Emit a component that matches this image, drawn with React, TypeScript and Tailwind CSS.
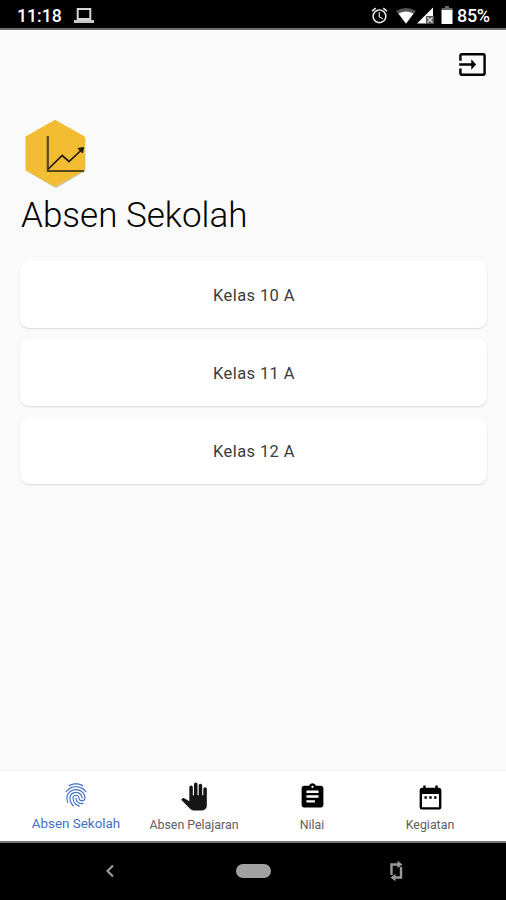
import React from "react";
import { MdInput, MdAlarm, MdAssignment, MdDateRange, MdFingerprint, MdPanTool } from "react-icons/md";

const classes = ["Kelas 10 A", "Kelas 11 A", "Kelas 12 A"];

export default function App() {
  return (
    <div className="flex h-[900px] w-[506px] flex-col overflow-hidden bg-[#fafafa] font-['Roboto',sans-serif] text-black">
      <header className="flex h-[30px] shrink-0 items-start border-b-2 border-[#707070] bg-black pl-[17px] text-white">
        <span className="mt-[4px] w-[58px] text-[17.7px] leading-6 font-medium"><span className="inline-block whitespace-nowrap">11:18</span></span>
        <svg className="mt-[7px] ml-[-1px]" width="20" height="17" viewBox="0 0 20 17" fill="none">
          <path d="M3.7 2h12.6v10H3.7z" stroke="#d6d6d6" strokeWidth="2" />
          <path d="M0 13h20v3H0z" fill="#c9c9c9" />
        </svg>
        <MdAlarm className="mt-[6px] ml-[276px] h-[19px] w-[19px] text-[#e8e8e8]" />
        <svg className="mt-[8px] ml-[7px]" width="20" height="16" viewBox="0 0 20 16">
          <path d="M0 3Q10-3 20 3L10 16Z" fill="#555" />
          <path d="M2.5 5.5Q10 1.5 17.5 5.5L10 15.5Z" fill="white" />
        </svg>
        <svg className="mt-[7px] ml-[1px]" width="17" height="17" viewBox="0 0 17 17">
          <path d="M0 16.5L16 .5v16Z" fill="white" />
          <path d="M9 9h8v8H9z" fill="#555" />
          <path d="M10.5 10.5l5 5m0-5l-5 5" stroke="#ddd" strokeWidth="1.4" />
        </svg>
        <svg className="mt-[6px] ml-[7px]" width="12" height="18" viewBox="0 0 12 18">
          <path d="M4 0h4v2h3.5v3H.5V2H4Z" fill="#666" />
          <path d="M.5 4h11v14H.5z" fill="white" />
        </svg>
        <span className="mt-[4px] ml-[4px] text-[18px] leading-6 font-medium tracking-[-0.3px]">85%</span>
      </header>

      <main className="flex min-h-0 flex-1 flex-col px-5">
        <div className="mr-[-1px] flex h-[89px] shrink-0 justify-end pt-[19px]">
          <MdInput className="h-[31px] w-[29px]" preserveAspectRatio="none" />
        </div>
        <svg className="ml-[4px] shrink-0" width="64" height="71" viewBox="0 0 64 71" fill="none">
          <path d="M31.5 2.5L61.5 19.5v32.5L32 69.2 2.2 52Z" fill="#c9c9c9" />
          <path d="M31 .7L60.8 17.5v34L31 68 1.5 51.3V17.5Z" fill="#f2bd32" />
          <path d="M23.8 17v35H60" stroke="#59471c" strokeWidth="2.2" />
          <path d="M24.3 50L38.2 36.5 45 42.5 58.5 30" stroke="#241d0d" strokeWidth="1.7" />
          <path d="M54 29.5l5.5-1-1 5.5Z" fill="#241d0d" stroke="#241d0d" strokeWidth="1" />
        </svg>
        <h1 className="mt-[6px] ml-[1px] h-[40px] shrink-0 text-[35px] leading-[40px] font-light whitespace-nowrap">Absen Sekolah</h1>
        <div className="mt-[25px] mr-[-1px] flex flex-col gap-[11px]">
          {classes.map((name) => (
            <button key={name} className="h-[67px] w-full rounded-[9px] bg-white pt-[3px] pl-px text-[16.5px] tracking-[0.4px] text-[#3c3c3c] shadow-[0_1px_2px_rgba(0,0,0,0.13)]">
              {name}
            </button>
          ))}
        </div>
      </main>

      <nav className="grid h-[71px] shrink-0 grid-cols-4 border-t border-[#f1f1f1] bg-white pr-[17px] pl-[17px] text-[12.4px] leading-4 text-[#606060]">
        <div className="flex flex-col items-center text-[13.4px] text-[#4470c4]">
          <MdFingerprint className="mt-[10px] h-[28px] w-[28px]" />
          <span className="mt-[7px] whitespace-nowrap">Absen Sekolah</span>
        </div>
        <div className="flex flex-col items-center">
          <MdPanTool className="mt-[11px] h-[29px] w-[28px] text-[#151515]" />
          <span className="mt-[6px] whitespace-nowrap">Absen Pelajaran</span>
        </div>
        <div className="flex flex-col items-center">
          <MdAssignment className="mt-[11px] h-[29px] w-[29px] text-black" />
          <span className="mt-[6px]">Nilai</span>
        </div>
        <div className="flex flex-col items-center">
          <MdDateRange className="mt-[12px] h-[29px] w-[29px] text-black" />
          <span className="mt-[5px]">Kegiatan</span>
        </div>
      </nav>

      <footer className="flex h-[59px] shrink-0 items-center border-t-2 border-[#777] bg-black">
        <svg className="mt-[-2px] ml-[105px]" width="10" height="14" viewBox="0 0 10 14" fill="none">
          <path d="M8 1.5L2.5 7 8 12.5" stroke="#999" strokeWidth="2.2" />
        </svg>
        <span className="mt-[-2px] ml-[121px] h-[14px] w-[35px] rounded-full bg-[#a1a1a1]" />
        <svg className="mt-[-2px] ml-[118px]" width="15" height="22" viewBox="0 0 15 22">
          <path d="M2.5 15V4.5h7M12 7v10.5H5" fill="none" stroke="#999" strokeWidth="2.4" />
          <path d="M8.5.8l5 3.7-5 3.7ZM6.5 13.8l-5 3.7 5 3.7Z" fill="#999" />
        </svg>
      </footer>
    </div>
  );
}
